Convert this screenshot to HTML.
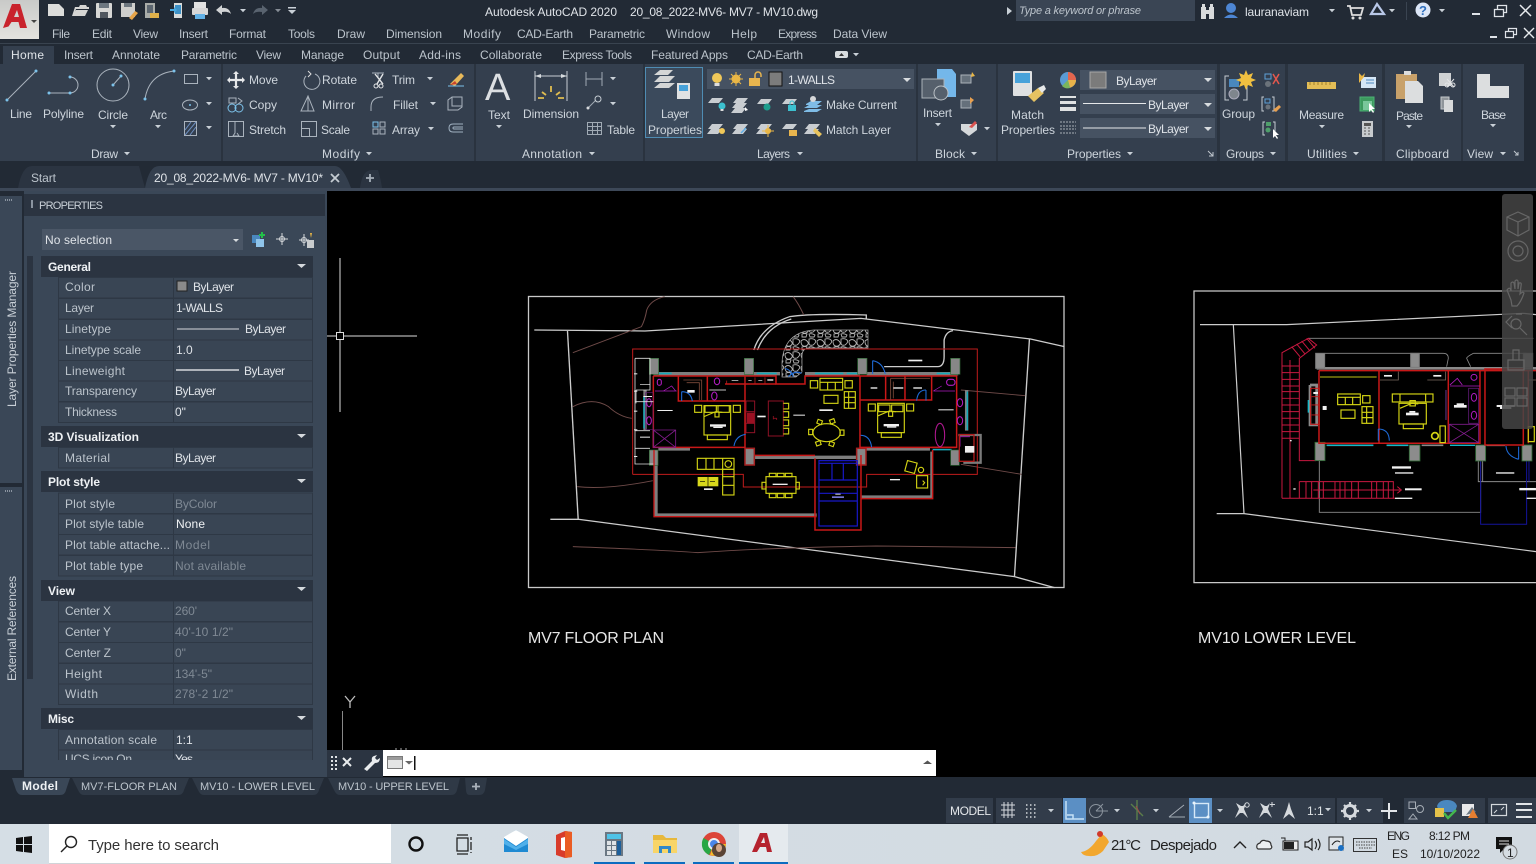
<!DOCTYPE html>
<html lang="en"><head><meta charset="utf-8"><title>Autodesk AutoCAD 2020</title>
<style>
html,body{margin:0;padding:0;background:#000;width:1536px;height:864px;overflow:hidden}
svg{display:block;position:absolute;left:0;top:0}
text{font-family:"Liberation Sans",sans-serif;font-size:12px;fill:#ced5dc}
.m{fill:#bcc4cc}
.d{fill:#7f8994}
.b{font-weight:bold;fill:#eef1f4}
.v{fill:#dfe3e8}
.h{fill:#c9d0d7}
.c{font-size:11px}
</style></head><body>
<svg width="1536" height="864" viewBox="0 0 1536 864" xmlns="http://www.w3.org/2000/svg">
<defs>
<linearGradient id="lg" x1="0" y1="0" x2="0" y2="1"><stop offset="0" stop-color="#c9cac8"/><stop offset="1" stop-color="#e4e3df"/></linearGradient>
<linearGradient id="sb" x1="0" y1="0" x2="1" y2="0"><stop offset="0" stop-color="#d5dee5"/><stop offset="1" stop-color="#d2dae1"/></linearGradient>
<pattern id="cob" width="16" height="13" patternUnits="userSpaceOnUse">
<path d="M1 3q3-3 6 0t-1 5q-5 1-5-5zM9 1q4-1 6 1t-2 5q-4 1-4-2zM2 9q3-1 5 0l-1 3H2zM9 9q3-1 6 1l-1 2h-4z" fill="none" stroke="#b4b4b4" stroke-width=".9"/>
</pattern>
<path id="da" d="M0 0h6l-3 3.2z" fill="#c9d0d7"/>
<g id="ls"><path d="M3 2h11l-4 5H-1z" fill="#c9cdd1"/></g>
</defs>

<!-- base -->
<rect width="1536" height="864" fill="#222a35"/>
<rect x="0" y="43" width="1536" height="1" fill="#39434f"/>
<rect x="0" y="64" width="1524" height="97" fill="#343f4e"/>
<rect x="3" y="46" width="51" height="18" fill="#343f4e"/>

<!-- A logo -->
<rect x="0" y="0" width="39" height="39" fill="url(#lg)"/>
<path d="M3 28 12 4h8l7 24h-7l-1.500-6h-7l-3 4.500zM14 17h5l-2-7z" fill="#c9232c"/>
<path d="M31 20h6l-3 3z" fill="#444"/>

<!-- QAT -->
<path d="M48 4h11l5 5v7H48z" fill="#dcdcda"/>
<path d="M72 16l3-9h4l1-2h6l1 2h2v2h-13l-2 7zM73 16l3-6h12l-3 6z" fill="#d5d5d3"/>
<rect x="96" y="3" width="16" height="15" rx="1" fill="#d7d7d5"/><rect x="99" y="3" width="10" height="5" fill="#6d7780"/><rect x="100" y="12" width="8" height="6" fill="#50575f"/>
<rect x="121" y="3" width="14" height="14" fill="#cfcfcd"/><rect x="124" y="3" width="8" height="4" fill="#6d7780"/><path d="M129 18l6-7 3 2-6 7z" fill="#e6a54a"/>
<rect x="145" y="3" width="10" height="15" fill="#a9aca9"/><rect x="147" y="5" width="6" height="8" fill="#5c6670"/><path d="M150 13h9v5h-9z" fill="#dfb04a"/>
<rect x="174" y="3" width="8" height="15" fill="#d9dcdc"/><rect x="175" y="5" width="6" height="9" fill="#3d91c7"/><path d="M170 9h4V7l3 3-3 3v-2h-4z" fill="#49a9e0"/>
<rect x="194" y="2" width="12" height="6" fill="#e1e1e1"/><rect x="192" y="8" width="16" height="7" rx="1" fill="#d7d7d7"/><rect x="195" y="14" width="10" height="5" fill="#62b1e6"/>
<path d="M216 10l6-5v3q7-1 9 6-3-3-9-2v3z" fill="#d1d3d5"/>
<use href="#da" x="240" y="9"/>
<path d="M268 10l-6-5v3q-7-1-9 6 3-3 9-2v3z" fill="#59636f"/>
<use href="#da" x="275" y="9" opacity=".6"/>
<rect x="288" y="7" width="8" height="1.500" fill="#c9d0d7"/><path d="M288 10h8l-4 4z" fill="#c9d0d7"/>

<!-- title -->
<text x="485" y="16" textLength="132" class="v">Autodesk AutoCAD 2020</text>
<text x="630" y="16" textLength="188" class="v">20_08_2022-MV6- MV7 - MV10.dwg</text>
<path d="M1007 7l5 4-5 4z" fill="#c9d0d7"/>
<rect x="1016" y="0" width="179" height="21" fill="#3a4554"/>
<text x="1019" y="14" textLength="122" font-style="italic" style="font-size:11px" class="m">Type a keyword or phrase</text>
<path d="M1201 7h5v12h-5zM1209 7h5v12h-5zM1202 4h3v3h-3zM1210 4h3v3h-3zM1206 10h3v4h-3z" fill="#d8dadb"/>
<path d="M1231 3a4.500 4.500 0 1 1 0 10 4.500 4.500 0 1 1 0-10zM1224 18q7-7 14 0z" fill="#4d86d4"/>
<text x="1245" y="16" textLength="64" class="v">lauranaviam</text>
<use href="#da" x="1329" y="9"/>
<path d="M1347 6h3l2 9h9l2-7h-12" fill="none" stroke="#ddd" stroke-width="1.800"/><circle cx="1353" cy="18" r="1.500" fill="#ddd"/><circle cx="1360" cy="18" r="1.500" fill="#ddd"/>
<path d="M1377 4l7 10h-13z" fill="none" stroke="#b9c8e8" stroke-width="2.200"/>
<use href="#da" x="1389" y="9"/>
<rect x="1406" y="2" width="1" height="18" fill="#3a4451"/>
<circle cx="1423" cy="10" r="7.500" fill="#dce6f7"/><text x="1419" y="15" style="font-size:13px;font-weight:bold;fill:#2f6fbd">?</text>
<use href="#da" x="1439" y="9"/>
<rect x="1472" y="13" width="8" height="2" fill="#dfe3e8"/>
<path d="M1494.500 9.500h9v7h-9zM1497.500 9V5.500h9v7H1504" fill="none" stroke="#dfe3e8" stroke-width="1.300"/>
<path d="M1520 5l11 11M1531 5l-11 11" stroke="#e8ebee" stroke-width="1.500"/>

<!-- menu -->
<text x="52" y="38" textLength="18" class="m">File</text>
<text x="92" y="38" textLength="20" class="m">Edit</text>
<text x="133" y="38" textLength="25" class="m">View</text>
<text x="179" y="38" textLength="29" class="m">Insert</text>
<text x="229" y="38" textLength="37" class="m">Format</text>
<text x="288" y="38" textLength="27" class="m">Tools</text>
<text x="337" y="38" textLength="28" class="m">Draw</text>
<text x="386" y="38" textLength="56" class="m">Dimension</text>
<text x="463" y="38" textLength="38" class="m">Modify</text>
<text x="517" y="38" textLength="56" class="m">CAD-Earth</text>
<text x="589" y="38" textLength="56" class="m">Parametric</text>
<text x="666" y="38" textLength="44" class="m">Window</text>
<text x="731" y="38" textLength="26" class="m">Help</text>
<text x="778" y="38" textLength="39" class="m">Express</text>
<text x="833" y="38" textLength="54" class="m">Data View</text>
<rect x="1490" y="36" width="7" height="2" fill="#dfe3e8"/>
<path d="M1505.500 31.500h8v6h-8zM1508.500 31v-2.500h8v6H1514" fill="none" stroke="#dfe3e8" stroke-width="1.200"/>
<path d="M1524 28l10 10M1534 28l-10 10" stroke="#e8ebee" stroke-width="1.400"/>

<!-- ribbon tabs -->
<text x="11" y="59" textLength="33" class="v">Home</text>
<text x="64" y="59" textLength="29" class="m">Insert</text>
<text x="112" y="59" textLength="48" class="m">Annotate</text>
<text x="181" y="59" textLength="56" class="m">Parametric</text>
<text x="256" y="59" textLength="25" class="m">View</text>
<text x="301" y="59" textLength="43" class="m">Manage</text>
<text x="363" y="59" textLength="37" class="m">Output</text>
<text x="419" y="59" textLength="42" class="m">Add-ins</text>
<text x="480" y="59" textLength="62" class="m">Collaborate</text>
<text x="562" y="59" textLength="70" class="m">Express Tools</text>
<text x="651" y="59" textLength="77" class="m">Featured Apps</text>
<text x="747" y="59" textLength="56" class="m">CAD-Earth</text>
<rect x="835" y="51" width="13" height="7" rx="2" fill="#d8dcdf"/><path d="M839 56l2.500-3 2.500 3z" fill="#333"/>
<use href="#da" x="853" y="53"/>

<!-- panel separators -->
<g fill="#2a333f">
<rect x="221" y="64" width="2" height="97"/><rect x="474" y="64" width="2" height="97"/><rect x="643" y="64" width="2" height="97"/><rect x="916" y="64" width="2" height="97"/><rect x="996" y="64" width="2" height="97"/><rect x="1217" y="64" width="3" height="97"/><rect x="1285" y="64" width="3" height="97"/><rect x="1382" y="64" width="3" height="97"/><rect x="1461" y="64" width="2" height="97"/>
</g>

<!-- Draw -->
<g fill="none" stroke="#aab3bd" stroke-width="1">
<path d="M7 100 36 71"/>
<path d="M49 93h21a8 8 0 0 0 0-16"/>
<circle cx="113" cy="85" r="16"/>
<path d="M113 85l8-9"/>
<path d="M145 99q4-25 29-28"/>
<rect x="184.500" y="74.500" width="13" height="9"/>
<ellipse cx="190" cy="105" rx="7.500" ry="5"/>
<rect x="184.500" y="121.500" width="12" height="14"/>
<path d="M185 130l6-8M185 135l11-13M190 135l6-8" stroke="#6d8fc0"/>
</g>
<g fill="#7cc2ea"><circle cx="7" cy="100" r="1.500"/><circle cx="36" cy="71" r="1.500"/><circle cx="49" cy="93" r="1.500"/><circle cx="70" cy="93" r="1.500"/><circle cx="70" cy="77" r="1.500"/><circle cx="113" cy="85" r="1.500"/><circle cx="121" cy="76" r="1.500"/><circle cx="145" cy="99" r="1.500"/><circle cx="174" cy="71" r="1.500"/><circle cx="190" cy="105" r="1"/></g>
<use href="#da" x="206" y="77"/><use href="#da" x="206" y="102"/><use href="#da" x="206" y="126"/>
<text x="10" y="118" textLength="22">Line</text>
<text x="43" y="118" textLength="41">Polyline</text>
<text x="98" y="119" textLength="30">Circle</text>
<text x="150" y="119" textLength="17">Arc</text>
<use href="#da" x="110" y="125"/><use href="#da" x="155" y="125"/>
<text x="91" y="158" textLength="27">Draw</text><use href="#da" x="124" y="152"/>

<!-- Modify -->
<path d="M236 72v16M228 80h16" stroke="#e6e8ea" stroke-width="2.200"/><path d="M233 74l3-3 3 3zM233 86l3 3 3-3zM230 77l-3 3 3 3zM242 77l3 3-3 3z" fill="#e6e8ea"/>
<g fill="none" stroke="#aab3bd" stroke-width="1">
<rect x="229" y="98" width="7" height="5"/><circle cx="232" cy="108" r="4" stroke="#7cc2ea"/><circle cx="239" cy="108" r="4" stroke="#7cc2ea"/><path d="M238 98l4 3-4 3"/>
<path d="M228.500 121.500h15v15h-15z"/><path d="M235 122v11l-2 3h6l-2-3"/>
<path d="M315 74a8 8 0 1 1-9 2"/><path d="M308 71l3 3-3 3" stroke="#ddd"/>
<path d="M301 111h13l-6-15zM308 96v15"/>
<rect x="301.500" y="121.500" width="15" height="15"/><rect x="301.500" y="128.500" width="8" height="8"/>
<path d="M372 73h12M378 73v5"/>
<path d="M371 111v-4q0-10 12-10"/>
<rect x="373" y="122" width="5" height="5" stroke="#7cc2ea"/><rect x="380" y="122" width="5" height="5"/><rect x="373" y="129" width="5" height="5"/><rect x="380" y="129" width="5" height="5"/>
<path d="M448 100l4-3h10v10l-4 3h-10zM452 97v9h10"/>
<path d="M463 124h-10q-4 0-4 4t4 4h10M463 127h-9q-1 0-1 1t1 1h9" stroke="#9fb0c0"/>
</g>
<path d="M375 74l8 10M383 74l-6 10" stroke="#e3e5e7" stroke-width="1.400" fill="none"/><circle cx="376" cy="86" r="2" fill="none" stroke="#e3e5e7"/><circle cx="381" cy="86" r="2" fill="none" stroke="#e3e5e7"/>
<path d="M450 84l11-11 3 3-9 10z" fill="#e8b95a"/><path d="M448 86h16" stroke="#7cc2ea"/><path d="M450 85l5-4 2 3z" fill="#c9432e"/>
<text x="249" y="84" textLength="29">Move</text><text x="249" y="109" textLength="28">Copy</text><text x="249" y="134" textLength="37">Stretch</text>
<text x="322" y="84" textLength="35">Rotate</text><text x="322" y="109" textLength="33">Mirror</text><text x="321" y="134" textLength="29">Scale</text>
<text x="392" y="84" textLength="23">Trim</text><text x="393" y="109" textLength="25">Fillet</text><text x="392" y="134" textLength="28">Array</text>
<use href="#da" x="427" y="77"/><use href="#da" x="430" y="102"/><use href="#da" x="428" y="127"/>
<text x="322" y="158" textLength="38">Modify</text><use href="#da" x="366" y="152"/>

<!-- Annotation -->
<text x="485" y="100" style="font-size:38px;fill:#dcdfe2">A</text>
<text x="488" y="119" textLength="22">Text</text><use href="#da" x="496" y="125"/>
<path d="M535 71v30M567 71v30M535 76h32" stroke="#c7ced4" fill="none"/><path d="M535 76l6-2v4zM567 76l-6-2v4z" fill="#d6dadd"/>
<path d="M551 86v6M542 92l4 3M560 92l-4 3M538 98h6M558 98h6" stroke="#e0bd50" stroke-width="1.800"/>
<text x="523" y="118" textLength="56">Dimension</text>
<path d="M586 72v14M602 72v14M586 79h16" stroke="#a0aab4" fill="none"/>
<use href="#da" x="610" y="77"/>
<path d="M588 108l8-8" stroke="#a0aab4"/><circle cx="598" cy="99" r="3" fill="none" stroke="#c7ced4"/><circle cx="588" cy="108" r="1.500" fill="#d7dadd"/>
<use href="#da" x="610" y="102"/>
<path d="M587.500 122.500h14v12h-14zM587.500 126.500h14M587.500 130.500h14M592.500 122.500v12M597.500 122.500v12" fill="none" stroke="#a0aab4"/>
<text x="607" y="134" textLength="28">Table</text>
<text x="522" y="158" textLength="60">Annotation</text><use href="#da" x="589" y="152"/>

<!-- Layers -->
<rect x="645.500" y="67.500" width="57" height="70" fill="#3b4a5c" stroke="#4f8cb3"/>
<path d="M660 70h13l-5 5h-14zM660 76h15l-6 6h-15zM660 83h15l-6 5h-15z" fill="#d4d6d6"/>
<rect x="677" y="83" width="13" height="16" fill="#e0e2e3"/><rect x="679" y="85" width="9" height="6" fill="#47a2da"/>
<text x="661" y="118" textLength="28">Layer</text>
<text x="648" y="134" textLength="54">Properties</text>
<rect x="707" y="69" width="207" height="20" fill="#465262"/>
<circle cx="717" cy="78" r="5" fill="#f0c859"/><rect x="714.500" y="83" width="5" height="3" fill="#ddd"/>
<circle cx="736" cy="79" r="4.500" fill="#eab746"/><path d="M736 72v14M729 79h14M731 74l10 10M741 74l-10 10" stroke="#eab746"/>
<rect x="749" y="78" width="11" height="8" fill="#e8b54e"/><path d="M755 78v-3a3 3 0 0 1 6 0v2" fill="none" stroke="#e8b54e" stroke-width="1.500"/>
<rect x="769" y="72" width="13" height="14" fill="#7c7c7c" stroke="#111"/>
<text x="788" y="84" textLength="47" class="v">1-WALLS</text>
<path d="M903 78h8l-4 4z" fill="#d8dcdf"/>
<use href="#ls" x="709" y="96"/><circle cx="722" cy="106" r="3.500" fill="#3cc0cf"/><rect x="720.500" y="109" width="3" height="2" fill="#ddd"/>
<use href="#ls" x="734" y="96"/><use href="#ls" x="733" y="101"/><use href="#ls" x="732" y="106"/><path d="M745 107l3 3-3 1z" fill="#fff"/>
<use href="#ls" x="758" y="97"/><circle cx="767" cy="107" r="3.500" fill="#1e9e8d"/>
<use href="#ls" x="783" y="97"/><rect x="788" y="105" width="8" height="6" fill="#3cc0cf"/><path d="M790 105v-2a2 2 0 0 1 4 0v2" fill="none" stroke="#3cc0cf"/>
<path d="M806 104l5-3h11l-5 4h-11zM804 108l5-3h13l-5 3h-13zM804 111l5-2h13l-5 3h-13z" fill="#7fbce6"/><circle cx="813" cy="99" r="3" fill="#d5d7d9"/>
<text x="826" y="109" textLength="71">Make Current</text>
<use href="#ls" x="709" y="122"/><use href="#ls" x="708" y="127"/><circle cx="722" cy="131" r="3" fill="#f0c859"/>
<use href="#ls" x="734" y="122"/><use href="#ls" x="733" y="127"/><path d="M741 133l5-5" stroke="#5fb0e8" stroke-width="1.500"/>
<use href="#ls" x="758" y="122"/><use href="#ls" x="757" y="127"/><circle cx="768" cy="131" r="3" fill="#eab746"/><path d="M768 125v12M762 131h12" stroke="#eab746"/>
<use href="#ls" x="783" y="122"/><rect x="789" y="130" width="8" height="6" fill="#e8b54e"/>
<use href="#ls" x="806" y="122"/><use href="#ls" x="805" y="127"/><path d="M815 128l7 6-3 3-6-6z" fill="#e8c35e"/>
<text x="826" y="134" textLength="65">Match Layer</text>
<text x="757" y="158" textLength="33">Layers</text><use href="#da" x="797" y="152"/>

<!-- Block -->
<path d="M937 69h15l4 5v23h-19z" fill="#74b7ea"/>
<rect x="922" y="79" width="22" height="19" fill="#56606c" stroke="#aab2b8"/>
<circle cx="941" cy="93" r="7" fill="#56606c" stroke="#bac0c5"/>
<text x="923" y="117" textLength="29">Insert</text><use href="#da" x="935" y="123"/>
<rect x="961" y="75" width="10" height="8" fill="#65707b" stroke="#aab2b8"/><path d="M972 72l3 4-4 1z" fill="#eab746"/>
<rect x="961" y="100" width="10" height="8" fill="#65707b" stroke="#aab2b8"/><path d="M970 97l4 3-4 4z" fill="#e8a050"/>
<path d="M961 124h16v6l-8 6-8-6z" fill="#d5d8da"/><path d="M969 127l6-6 2 2-5 5z" fill="#d9534f"/><use href="#da" x="984" y="127"/>
<text x="935" y="158" textLength="30">Block</text><use href="#da" x="971" y="152"/>

<!-- Properties -->
<rect x="1013" y="71" width="19" height="25" rx="1" fill="#dfe1e2"/><rect x="1015" y="73" width="15" height="10" fill="#47a2da"/>
<path d="M1028 96l10-8 6 5-10 9z" fill="#e5c262"/><path d="M1038 88l6-3 2 4-4 4z" fill="#e6e8e9"/>
<text x="1011" y="119" textLength="33">Match</text><text x="1001" y="134" textLength="54">Properties</text>
<circle cx="1068" cy="80" r="8" fill="#5a9bd5"/><path d="M1068 80V72a8 8 0 0 1 8 8z" fill="#e4654d"/><path d="M1068 80h8a8 8 0 0 1-6 7.800z" fill="#e9b34a"/><path d="M1068 80l2 8a8 8 0 0 1-8-2z" fill="#7ab55c"/>
<rect x="1060" y="96" width="16" height="2" fill="#dfe1e2"/><rect x="1060" y="101" width="16" height="3" fill="#dfe1e2"/><rect x="1060" y="107" width="16" height="4" fill="#dfe1e2"/>
<path d="M1060 122h16M1060 126h16M1060 129h16M1060 133h16" stroke="#a8afb7" stroke-dasharray="2 1"/>
<rect x="1080" y="70" width="135" height="20" fill="#465262"/><rect x="1080" y="94" width="135" height="20" fill="#465262"/><rect x="1080" y="118" width="135" height="20" fill="#465262"/>
<rect x="1090" y="72" width="16" height="16" fill="#7b7b7b" stroke="#a7a7a7"/>
<text x="1116" y="85" textLength="41" class="v">ByLayer</text>
<path d="M1083 103.500h63M1083 128h63" stroke="#e6e8ea"/>
<text x="1148" y="109" textLength="41" class="v">ByLayer</text><text x="1148" y="133" textLength="41" class="v">ByLayer</text>
<path d="M1204 78h8l-4 4zM1204 103h8l-4 4zM1204 127h8l-4 4z" fill="#d8dcdf"/>
<text x="1067" y="158" textLength="54">Properties</text><use href="#da" x="1127" y="152"/>
<path d="M1208 151l5 5M1213 152v4h-4" stroke="#c0c7ce" fill="none"/>

<!-- Groups -->
<path d="M1229 76h-4v24h4M1243 76h4v24h-4" stroke="#c4cbd2" fill="none"/>
<rect x="1229" y="79" width="10" height="8" fill="#4a88bf"/><circle cx="1234" cy="94" r="5" fill="#7f868d" stroke="#aab"/>
<path d="M1246 70l2 5 5-2-2 5 5 2-5 2 2 5-5-2-2 5-2-5-5 2 2-5-5-2 5-2-2-5 5 2z" fill="#f0c040"/>
<text x="1222" y="118" textLength="33">Group</text>
<rect x="1265" y="74" width="6" height="5" fill="none" stroke="#5ea1d8"/><circle cx="1268" cy="84" r="3" fill="#6b737b"/><path d="M1273 74l6 10M1279 74l-6 10" stroke="#e5574d" stroke-width="1.500"/>
<path d="M1264 97h-2v14h2M1272 97h2v14h-2" stroke="#c4cbd2" fill="none"/><rect x="1265" y="99" width="5" height="4" fill="none" stroke="#5ea1d8"/><circle cx="1268" cy="107" r="2.500" fill="#6b737b"/><path d="M1273 110l6-5 2 2-5 5z" fill="#e8a050"/>
<path d="M1265 122h-2v13h2M1273 122h2v13h-2" stroke="#c4cbd2" fill="none"/><rect x="1266" y="122" width="5" height="4" fill="#4f9f6b"/><circle cx="1268" cy="130" r="2.500" fill="#4f9f6b"/><path d="M1273 129v9l2-2 2 3 1-1-2-3h3z" fill="#fff"/>
<text x="1226" y="158" textLength="38">Groups</text><use href="#da" x="1270" y="152"/>

<!-- Utilities -->
<rect x="1307" y="82" width="29" height="7" fill="#e3bd56"/><path d="M1310 82v3M1314 82v3M1318 82v3M1322 82v3M1326 82v3M1330 82v3" stroke="#a0812c"/>
<text x="1299" y="119" textLength="45">Measure</text><use href="#da" x="1319" y="125"/>
<rect x="1361" y="77" width="15" height="11" fill="#d5e6f5"/><path d="M1359 73l3 3 3-3-1 4-5 6z" fill="#eab746"/><path d="M1366 80h8M1366 83h8" stroke="#4a88bf"/>
<rect x="1360" y="97" width="14" height="14" fill="#3d9a5f" stroke="#4cb274"/><rect x="1363" y="101" width="9" height="9" fill="#79c79b"/><path d="M1369 103v9l2-2 2 3 1-1-2-3h3z" fill="#fff"/>
<rect x="1362" y="121" width="11" height="16" fill="#c7cbce"/><rect x="1364" y="123" width="7" height="3" fill="#555"/><path d="M1364 128h2M1368 128h2M1364 131h2M1368 131h2M1364 134h2M1368 134h2" stroke="#555"/>
<text x="1307" y="158" textLength="40">Utilities</text><use href="#da" x="1353" y="152"/>

<!-- Clipboard -->
<rect x="1396" y="74" width="21" height="25" fill="#c8a16a"/><rect x="1404" y="71" width="7" height="4" fill="#ddd"/>
<path d="M1405 81h13l5 5v17h-18z" fill="#dcdedf"/>
<text x="1396" y="120" textLength="27">Paste</text><use href="#da" x="1406" y="125"/>
<text x="1396" y="158" textLength="53">Clipboard</text>
<rect x="1439" y="73" width="12" height="13" fill="#cfd2d4"/><path d="M1447 79l7 8M1454 79l-7 8" stroke="#e3e5e7"/><circle cx="1447" cy="85" r="2" fill="none" stroke="#e3e5e7"/><circle cx="1453" cy="85" r="2" fill="none" stroke="#e3e5e7"/>
<rect x="1441" y="97" width="8" height="12" fill="#8f959a" stroke="#c5c9cc"/><rect x="1444" y="100" width="9" height="12" fill="#d8dadb"/>

<!-- View -->
<path d="M1477 74h13v12h19v12h-32z" fill="#dcdedf"/>
<text x="1481" y="119" textLength="25">Base</text><use href="#da" x="1490" y="124"/>
<text x="1467" y="158" textLength="26">View</text><use href="#da" x="1500" y="152"/>
<path d="M1514 151l4 4M1518 152v3h-3" stroke="#c0c7ce" fill="none"/>

<!-- doc tabs -->
<path d="M18 188q4-22 14-22h107l6 22z" fill="#2b3441"/>
<path d="M145 188q4-22 14-22h176q8 0 16 22z" fill="#343f4e"/>
<text x="31" y="182" textLength="25" class="m">Start</text>
<text x="154" y="182" textLength="169" class="v">20_08_2022-MV6- MV7 - MV10*</text>
<path d="M331 174l8 8M339 174l-8 8" stroke="#c5ccd3" stroke-width="1.800"/>
<path d="M360 188q2-18 12-18h6q3 10 4 18z" fill="#2b3441"/>
<path d="M370 174v8M366 178h8" stroke="#a5aeb8" stroke-width="1.800"/>
<rect x="0" y="188" width="1536" height="3" fill="#3d4858"/>

<!-- left zone -->
<rect x="0" y="191" width="327" height="586" fill="#3a4757"/>
<rect x="0" y="191" width="24" height="586" fill="#222a35"/>
<rect x="0" y="196" width="22" height="287" fill="#3a4757"/>
<rect x="0" y="487" width="22" height="283" fill="#3a4757"/>
<path d="M5 200h8M5 491h8" stroke="#8a94a0" stroke-dasharray="1 1" stroke-width="2"/>
<text transform="translate(16,407) rotate(-90)" textLength="136" class="h">Layer Properties Manager</text>
<text transform="translate(16,681) rotate(-90)" textLength="105" class="h">External References</text>
<rect x="24" y="194" width="301" height="22" fill="#2b3441"/>
<rect x="31" y="200" width="2" height="8" fill="#8a94a0"/>
<text x="39" y="209" textLength="64" class="h c">PROPERTIES</text>
<rect x="27" y="256" width="6" height="423" fill="#2b3441"/>
<rect x="42" y="229" width="201" height="21" fill="#4a5666"/>
<text x="45" y="244" textLength="67" class="v">No selection</text>
<path d="M233 239h6l-3 3z" fill="#d8dcdf"/>
<rect x="252" y="235" width="8" height="8" fill="#4a88bf"/><rect x="256" y="239" width="8" height="8" fill="#8fc4ea"/><path d="M262 232v6M259 235h6" stroke="#23c04a" stroke-width="2"/>
<circle cx="282" cy="239" r="2.500" fill="none" stroke="#d5d8db"/><path d="M282 233v12M276 239h12" stroke="#d5d8db"/>
<circle cx="304" cy="240" r="2.500" fill="none" stroke="#d5d8db"/><path d="M304 234v12M299 240h10" stroke="#d5d8db"/><rect x="307" y="240" width="7" height="8" fill="#c9ccce"/><path d="M310 233l2 0-1 5z" fill="#eab746"/>

<!-- property rows -->
<g fill="#394554" stroke="#2e3845">
<rect x="58.500" y="277.500" width="254" height="20.500"/><rect x="58.500" y="298.500" width="254" height="20.500"/><rect x="58.500" y="319.500" width="254" height="20.500"/><rect x="58.500" y="340" width="254" height="20.500"/><rect x="58.500" y="360.500" width="254" height="20.500"/><rect x="58.500" y="381" width="254" height="20.500"/><rect x="58.500" y="402" width="254" height="20.500"/>
<rect x="58.500" y="447.500" width="254" height="20.500"/>
<rect x="58.500" y="493" width="254" height="20.500"/><rect x="58.500" y="514" width="254" height="20.500"/><rect x="58.500" y="534.500" width="254" height="20.500"/><rect x="58.500" y="555.500" width="254" height="20.500"/>
<rect x="58.500" y="601" width="254" height="20.500"/><rect x="58.500" y="622" width="254" height="20.500"/><rect x="58.500" y="642.500" width="254" height="20.500"/><rect x="58.500" y="663.500" width="254" height="20.500"/><rect x="58.500" y="684" width="254" height="20.500"/>
<rect x="58.500" y="729.500" width="254" height="20.500"/><rect x="58.500" y="750" width="254" height="20.500"/>
</g>
<rect x="173" y="277" width="1" height="146" fill="#2e3845"/><rect x="173" y="447" width="1" height="21" fill="#2e3845"/><rect x="173" y="493" width="1" height="83" fill="#2e3845"/><rect x="173" y="601" width="1" height="104" fill="#2e3845"/><rect x="173" y="729" width="1" height="30" fill="#2e3845"/>
<g fill="#2b3441">
<rect x="41" y="256" width="272" height="21"/><rect x="41" y="426" width="272" height="21"/><rect x="41" y="471" width="272" height="21"/><rect x="41" y="580" width="272" height="21"/><rect x="41" y="708" width="272" height="21"/>
</g>
<g fill="#d4d8dc"><path d="M297 264h9l-4.500 4zM297 434h9l-4.500 4zM297 479h9l-4.500 4zM297 587h9l-4.500 4zM297 716h9l-4.500 4z"/></g>
<text x="48" y="271" textLength="43" class="b">General</text>
<text x="48" y="441" textLength="91" class="b">3D Visualization</text>
<text x="48" y="486" textLength="52" class="b">Plot style</text>
<text x="48" y="595" textLength="27" class="b">View</text>
<text x="48" y="723" textLength="26" class="b">Misc</text>
<text x="65" y="291" textLength="30" class="m">Color</text>
<text x="65" y="312" textLength="29" class="m">Layer</text>
<text x="65" y="333" textLength="46" class="m">Linetype</text>
<text x="65" y="354" textLength="76" class="m">Linetype scale</text>
<text x="65" y="375" textLength="60" class="m">Lineweight</text>
<text x="65" y="395" textLength="72" class="m">Transparency</text>
<text x="65" y="416" textLength="52" class="m">Thickness</text>
<text x="65" y="462" textLength="45" class="m">Material</text>
<text x="65" y="508" textLength="50" class="m">Plot style</text>
<text x="65" y="528" textLength="79" class="m">Plot style table</text>
<text x="65" y="549" textLength="105" class="m">Plot table attache...</text>
<text x="65" y="570" textLength="78" class="m">Plot table type</text>
<text x="65" y="615" textLength="46" class="m">Center X</text>
<text x="65" y="636" textLength="46" class="m">Center Y</text>
<text x="65" y="657" textLength="46" class="m">Center Z</text>
<text x="65" y="678" textLength="37" class="m">Height</text>
<text x="65" y="698" textLength="33" class="m">Width</text>
<text x="65" y="744" textLength="92" class="m">Annotation scale</text>
<rect x="177" y="281" width="10" height="10" fill="#8a8a8a" stroke="#222"/>
<text x="193" y="291" textLength="41" class="v">ByLayer</text>
<text x="176" y="312" textLength="47" class="v">1-WALLS</text>
<path d="M177 329h62" stroke="#d5d8db"/><text x="245" y="333" textLength="41" class="v">ByLayer</text>
<text x="176" y="354" class="v">1.0</text>
<path d="M176 370h63" stroke="#d5d8db" stroke-width="1.500"/><text x="244" y="375" textLength="41" class="v">ByLayer</text>
<text x="175" y="395" textLength="41" class="v">ByLayer</text>
<text x="175" y="416" class="v">0"</text>
<text x="175" y="462" textLength="41" class="v">ByLayer</text>
<text x="175" y="508" textLength="42" class="d">ByColor</text>
<text x="176" y="528" textLength="29" style="fill:#f0f2f4">None</text>
<text x="175" y="549" textLength="35" class="d">Model</text>
<text x="175" y="570" textLength="71" class="d">Not available</text>
<text x="175" y="615" textLength="22" class="d">260'</text>
<text x="175" y="636" textLength="58" class="d">40'-10 1/2"</text>
<text x="175" y="657" class="d">0"</text>
<text x="175" y="678" textLength="37" class="d">134'-5"</text>
<text x="175" y="698" textLength="58" class="d">278'-2 1/2"</text>
<text x="176" y="744" class="v">1:1</text>
<clipPath id="ucs"><rect x="58" y="750" width="255" height="10"/></clipPath>
<g clip-path="url(#ucs)"><text x="65" y="763" textLength="67" class="m">UCS icon On</text><text x="175" y="763" textLength="18" class="v">Yes</text></g>
<rect x="58" y="760" width="255" height="17" fill="#3a4757"/>

<!-- drawing area -->
<rect x="327" y="191" width="1209" height="586" fill="#000"/>

<!-- MV7 sheet frame -->
<rect x="528.500" y="296.500" width="535.500" height="291" fill="none" stroke="#c9c9c9" stroke-width="1.300"/>
<!-- site, zoom-4 coordinates -->
<g transform="translate(520,285) scale(.357,.3333)" fill="none">
<g stroke="#cccccc" stroke-width="3.800">
<path d="M40 135 350 138 955 100 1430 162 1525 185"/>
<path d="M133 138 163 703"/>
<path d="M85 703H163L1385 875 1497 908"/>
<path d="M1427 162 1385 875"/>
<path d="M655 195q20-70 100-100 60-10 215-5v12"/>
<path d="M665 195q25-70 95-93"/>
<path d="M1020 245H1170q18 0 18-30V165q5-25 25-28"/>
</g>
<g stroke="#6e4a48" stroke-width="2.800">
<path d="M148 203 340 125q10-20 15-50 10-30 50-40"/>
<path d="M765 35q15 20 30 55"/>
<path d="M148 365q55-30 100 0 30 30 65 35"/>
<path d="M160 605q80 10 212-18"/>
<path d="M148 785q250 10 350 18 200-15 500-20l390 5"/>
<path d="M1235 315l180 17M1235 538l170 30"/>
</g>
</g>
<!-- cobblestone -->
<path d="M782 375V362q2-30 32-32h54v18h-58q-8 0-8 8v16l-6 5h-14z" fill="url(#cob)" stroke="#a8a8a8" stroke-width=".7"/>
<!-- plan, zoom-10 coordinates -->
<g transform="translate(630,340) scale(.3333)" fill="none" stroke-width="3">
<path d="M8 403V27H1042V403H710V441H340V403H8" stroke="#c01c1c" stroke-width="3"/>
<g stroke="#7e7e7e" stroke-width="10"><path d="M70 101H450M525 101H690M710 101H985"/><path d="M1010 150V272M45 150V270"/><path d="M85 327H180M375 352H680M705 327H900"/><path d="M78 330V525H560" stroke-width="10"/><path d="M905 335V470H695" stroke-width="8"/></g>
<g stroke="#16a9b8" stroke-width="4.500"><path d="M75 100H125M380 100H440M555 100H640M650 100H690M920 100H960M42 170V265M1012 155V270M908 329H965M70 270V320"/></g>
<g fill="#878787" stroke="#2f6a35" stroke-width="2"><rect x="58" y="55" width="28" height="48"/><rect x="343" y="55" width="28" height="48"/><rect x="683" y="55" width="28" height="48"/><rect x="962" y="55" width="28" height="48"/><rect x="58" y="330" width="26" height="46"/><rect x="962" y="330" width="26" height="46"/></g>
<g fill="#878787" stroke="#a52020" stroke-width="4.500"><rect x="345" y="325" width="28" height="50"/><rect x="680" y="325" width="28" height="50"/></g>
<g stroke="#c81818" stroke-width="4.500"><path d="M70 108H438V132H525V108H980V322H690V108M70 108V322H345V183H145V108M232 108V183M345 108V183"/><path d="M285 132H438M690 180H905V108M767 108V180M825 108V180M977 322H905"/>
<path d="M72 330V530H560" stroke-width="4"/><path d="M375 346H555M555 355V570H693V345M695 476H908V330"/></g>
<path d="M160 120H215V180M170 128H208V180M782 115V180M782 115H900M790 125V175" stroke="#7e4a3a" stroke-width="2.500"/>
<path d="M290 122V131M345 108V132M375 112V131M405 112V131" stroke="#b01c1c" stroke-width="2.500"/>
<g stroke="#1e6bd8" stroke-width="3.200"><path d="M155 155q28 0 32 28M155 155v28M312 318q5-30 35-35M728 62q30 5 38 40M728 62v40M692 286q28 0 33 36M888 150q-25 0-28 32M888 150v32M465 85q20 5 25 25M475 110q20-20 40-10"/></g>
<g stroke="#b01cc0" stroke-width="3.200"><ellipse cx="57" cy="188" rx="7" ry="12"/><ellipse cx="57" cy="242" rx="7" ry="12"/><rect x="47" y="158" width="22" height="110" stroke-width="2" stroke="#5c1a70"/><rect x="82" y="118" width="12" height="18" rx="6"/><path d="M75 153H140M100 153l25-15 12 15" stroke-width="2"/><path d="M70 270H137V322H70ZM70 270l67 52M137 270l-67 52" stroke="#7f1c8a" stroke-width="2.500"/><ellipse cx="930" cy="285" rx="14" ry="35" stroke="#b01890"/><ellipse cx="990" cy="188" rx="8" ry="12"/><ellipse cx="990" cy="242" rx="8" ry="12"/><rect x="950" y="118" width="25" height="18" rx="8"/><path d="M910 153H975M910 153l25-15" stroke-width="2"/><ellipse cx="261" cy="124" rx="8" ry="10"/><ellipse cx="253" cy="168" rx="8" ry="12"/><path d="M238 150h50" stroke="#fff" stroke-width="2.500"/><path d="M990 290h30M990 290v30" stroke-width="2.500"/></g>
<path d="M15 55H60V150H18M15 55V372H70M18 150V190M15 185H70M15 325H60M15 272H60" stroke="#dedede" stroke-width="2.500"/>
<g fill="#eee"><rect x="12" y="100" width="10" height="3"/><rect x="12" y="152" width="10" height="3"/><rect x="12" y="212" width="10" height="3"/><rect x="12" y="268" width="10" height="3"/><rect x="12" y="348" width="10" height="3"/><rect x="30" y="132" width="30" height="2"/><rect x="40" y="168" width="26" height="3"/><rect x="30" y="290" width="30" height="3"/></g>
<g stroke="#8e1226" stroke-width="3"><rect x="348" y="183" width="26" height="95"/><rect x="415" y="183" width="45" height="105"/><path d="M348 215h26M348 250h26"/></g>
<rect x="351" y="218" width="22" height="32" fill="#9a1022"/>
<path d="M430 235h10v5M430 228v10" stroke="#8d1020" stroke-width="2.500"/>
<g stroke="#d4d414" stroke-width="3.400">
<rect x="222" y="197" width="80" height="88"/><rect x="225" y="197" width="34" height="20"/><rect x="264" y="197" width="34" height="20"/><rect x="194" y="196" width="21" height="21"/><rect x="310" y="196" width="21" height="21"/><rect x="232" y="285" width="60" height="14"/><path d="M222 230l35-15 20 2M255 215v16h12v-14"/>
<rect x="743" y="190" width="80" height="88"/><rect x="746" y="195" width="34" height="20"/><rect x="785" y="195" width="34" height="20"/><rect x="715" y="192" width="21" height="21"/><rect x="830" y="192" width="21" height="21"/><rect x="754" y="278" width="60" height="14"/><path d="M743 228l35-15 20 2M776 213v16h12v-14"/>
<rect x="570" y="115" width="68" height="35"/><path d="M570 127h68M593 127v23M616 127v23"/><rect x="541" y="122" width="22" height="22"/><rect x="645" y="122" width="22" height="22"/><rect x="582" y="166" width="42" height="24"/><rect x="643" y="155" width="33" height="50"/><path d="M643 172h33M643 188h33M656 155v50"/>
<ellipse cx="590" cy="278" rx="41" ry="27"/><rect x="562" y="240" width="14" height="12" transform="rotate(20 569 246)"/><rect x="600" y="238" width="14" height="12" transform="rotate(-20 607 244)"/><rect x="536" y="268" width="12" height="16"/><rect x="630" y="270" width="12" height="16"/><rect x="558" y="304" width="14" height="12" transform="rotate(-20 565 310)"/><rect x="598" y="306" width="14" height="12" transform="rotate(20 605 312)"/>
<path d="M460 190h16v17h-16M460 215h16v17h-16M460 240h16v17h-16M460 265h16v17h-16"/>
<rect x="202" y="355" width="110" height="33"/><path d="M228 355v33M252 355v33M278 355v33"/><rect x="278" y="388" width="34" height="77"/><path d="M278 410h34M278 436h34"/><circle cx="295" cy="372" r="10"/>
<rect x="408" y="410" width="90" height="50"/><rect x="418" y="400" width="20" height="10"/><rect x="442" y="400" width="20" height="10"/><rect x="466" y="400" width="20" height="10"/><rect x="418" y="461" width="20" height="12"/><rect x="442" y="461" width="20" height="12"/><rect x="466" y="461" width="20" height="12"/><rect x="396" y="427" width="12" height="20"/><rect x="498" y="427" width="10" height="20"/>
<rect x="828" y="365" width="30" height="32" transform="rotate(15 843 381)"/><circle cx="873" cy="390" r="8"/><rect x="860" y="407" width="33" height="37"/><path d="M878 422l6 6-6 8"/>
</g>
<rect x="203" y="411" width="62" height="28" fill="#d8d81c"/><path d="M234 411v28M210 425h15M240 425h15" stroke="#000" stroke-width="2"/>
<g stroke="#1818c8" stroke-width="3.600"><rect x="567" y="362" width="115" height="196"/><path d="M567 370H682M606 370v50M640 370v50M567 420H682M567 460H682M567 483H682"/></g>
<rect x="606" y="469" width="36" height="5" fill="#7878d8"/><rect x="616" y="461" width="16" height="3" fill="#ddd"/>
<path d="M985 285H1052V368H1000" stroke="#7a7a7a" stroke-width="7"/><rect x="988" y="284" width="44" height="80" stroke="#b01c1c" stroke-width="4"/>
<rect x="1005" y="318" width="28" height="20" fill="#eee"/>
<g fill="#f0f0f0"><rect x="240" y="253" width="48" height="7"/><rect x="250" y="260" width="28" height="4"/><rect x="761" y="252" width="46" height="7"/><rect x="771" y="259" width="28" height="4"/><rect x="382" y="227" width="25" height="5"/><rect x="490" y="224" width="35" height="3"/><rect x="568" y="208" width="40" height="5"/><rect x="222" y="445" width="26" height="5"/><rect x="428" y="431" width="45" height="4"/><rect x="780" y="417" width="30" height="4"/><rect x="835" y="59" width="42" height="5"/><rect x="82" y="210" width="46" height="3"/><rect x="925" y="208" width="46" height="3"/><rect x="172" y="150" width="22" height="8"/><rect x="305" y="121" width="20" height="2"/><rect x="355" y="120" width="10" height="2"/><rect x="385" y="120" width="12" height="2"/><rect x="412" y="118" width="18" height="4"/><rect x="722" y="142" width="20" height="4"/><rect x="790" y="142" width="30" height="4"/><rect x="850" y="142" width="26" height="4"/></g>
</g>
<text x="528" y="643" textLength="136" style="font-size:16px;fill:#e6e6e6">MV7 FLOOR PLAN</text>

<!-- MV10 -->
<text x="1198" y="643" textLength="158" style="font-size:16px;fill:#e6e6e6">MV10 LOWER LEVEL</text>
<g transform="translate(1180,190) scale(.3333)" fill="none" stroke-width="3">
<path d="M1068 303H42V1178H1068" stroke="#c9c9c9" stroke-width="3.800"/>
<path d="M60 404H320L1030 370 1068 374M160 404 192 971M110 971H192L1068 1085" stroke="#cccccc" stroke-width="3.600"/>
<path d="M385 445H1060M435 490H790q15 0 15 15l-5 25M880 490H1040M880 490q-20 10-20 15l12 25" stroke="#8a8a8a" stroke-width="2.500"/>
<path d="M418 770V967H902V770M895 810V875H1068M908 810V875" stroke="#8a8a8a" stroke-width="2.800"/>
<path d="M902 810V1003H1040V810M1047 810V875" stroke="#14149c" stroke-width="3"/>
<g stroke="#c81840" stroke-width="3"><path d="M306 925V488L385 445 410 465 358 505V812H408"/><path d="M330 510V925"/><path d="M306 925H645M358 875H640V925M358 875V925"/>
<path d="M306 528H358M306 548H358M306 568H358M306 588H358M306 605H358M306 625H358M306 645H358M306 665H358M306 685H358M306 705H358M306 725H358M306 745H358"/>
<path d="M335 470l25 30M350 462l25 30M365 453l25 30M380 445l25 30"/>
<path d="M378 875v50M395 875v50M415 875v50M430 875v50M465 875v50M480 875v50M495 875v50M515 875v50M535 875v50M575 875v50M590 875v50M610 875v50M625 875v50"/>
<path d="M400 900H660M652 890l12 10-12 10"/></g>
<path d="M410 535H1068M390 585H410V705H390V585" stroke="#8a8a8a" stroke-width="8"/>
<path d="M440 766H580M620 766H685M725 766H790M920 766H975" stroke="#8a8a8a" stroke-width="5"/>
<path d="M620 766H685M810 766H885M385 630V668M440 766H580" stroke="#16b8c8" stroke-width="4"/>
<g fill="#8c8c8c" stroke="#7c7c7c"><rect x="407" y="490" width="27" height="45"/><rect x="692" y="490" width="26" height="42"/><rect x="1030" y="490" width="28" height="42"/></g>
<g fill="#8c8c8c" stroke="#2f6a35" stroke-width="2.500"><rect x="405" y="757" width="30" height="55"/><rect x="688" y="765" width="32" height="48"/><rect x="887" y="765" width="30" height="48"/><rect x="1026" y="765" width="30" height="48"/></g>
<g stroke="#c81818" stroke-width="4.500"><path d="M417 542H1068M417 542V760H900V542M597 542V760M805 542V760M915 537H1030V765H915ZM1045 540V760"/><rect x="392" y="595" width="26" height="108" stroke-width="3"/><path d="M395 620h22M395 645h22M395 675h22" stroke-width="2.500"/></g>
<path d="M420 561H590" stroke="#c0c014" stroke-width="3"/>
<path d="M600 570H655V545M742 570H797V545M1045 570H1068" stroke="#7a6a60" stroke-width="2.500"/>
<g stroke="#d4d414" stroke-width="3.500"><rect x="473" y="612" width="68" height="32"/><path d="M473 622h68M496 622v22M518 622v22"/><rect x="548" y="617" width="22" height="22"/><rect x="483" y="660" width="42" height="25"/><rect x="546" y="650" width="33" height="50"/><path d="M546 667h33M546 683h33M560 650v50"/>
<rect x="637" y="612" width="122" height="24"/><rect x="657" y="640" width="82" height="62"/><rect x="670" y="702" width="60" height="14"/><path d="M660 612v24M737 612v24M660 655l35-15 20 2M690 632h16v16h-16z"/>
<path d="M780 708H796V758H780ZM1045 710h18v45h-18z"/></g>
<circle cx="765" cy="738" r="10" stroke="#d4d414" stroke-width="5"/>
<g stroke="#1e6bd8" stroke-width="3.200"><path d="M595 717q32 0 33 35M595 717v35M978 768q2 30 38 40M1016 770v38"/></g>
<g stroke="#b01cc0" stroke-width="3"><ellipse cx="882" cy="622" rx="8" ry="12"/><ellipse cx="882" cy="676" rx="8" ry="12"/><ellipse cx="882" cy="562" rx="9" ry="9"/><path d="M810 588H900M810 585l22-20 15 20" stroke-width="2.500"/><rect x="866" y="595" width="30" height="105" stroke="#5c1a70" stroke-width="2.500"/><path d="M808 703H896V758H808ZM808 703l88 55M896 703l-88 55" stroke="#7f1c8a" stroke-width="2.500"/></g>
<path d="M798 600V690" stroke="#6a3a90" stroke-width="3"/>
<g fill="#f2f2f2" stroke="none"><rect x="400" y="606" width="14" height="6"/><rect x="428" y="648" width="12" height="12"/><rect x="612" y="555" width="24" height="5"/><rect x="760" y="555" width="24" height="5"/><rect x="678" y="668" width="38" height="8"/><rect x="688" y="663" width="18" height="5"/><rect x="822" y="645" width="38" height="8"/><rect x="830" y="640" width="22" height="5"/><rect x="950" y="645" width="54" height="6"/><rect x="960" y="651" width="34" height="6"/><rect x="636" y="829" width="57" height="7"/><rect x="645" y="847" width="55" height="4"/><rect x="948" y="847" width="55" height="4"/><rect x="675" y="895" width="50" height="6"/><rect x="645" y="923" width="52" height="4"/><rect x="1018" y="894" width="50" height="7"/><rect x="1040" y="923" width="28" height="4"/></g>
<g fill="#eee" stroke="none"><rect x="340" y="895" width="7" height="4"/><rect x="330" y="750" width="5" height="4"/></g>
</g>

<!-- crosshair -->
<path d="M340 258V412M327 336H417" stroke="#dcdcdc" stroke-width="1"/>
<rect x="336.500" y="332.500" width="7" height="7" fill="#000" stroke="#dcdcdc"/>
<!-- UCS -->
<path d="M345 696l5 6 5-6M350 702v6" fill="none" stroke="#bdbdbd" stroke-width="1.300"/>
<path d="M342.500 711V750" stroke="#888" stroke-width="1"/>
<path d="M395 749h2M400 749h2M405 749h2" stroke="#aaa"/>

<!-- nav bar -->
<rect x="1502" y="194" width="31" height="235" rx="3" fill="#454545" fill-opacity=".85"/>
<g fill="none" stroke="#666" stroke-width="1.200">
<path d="M1518 212l11 5v13l-11 6-11-6v-13zM1507 217l11 5 11-5M1518 222v14"/>
<circle cx="1518" cy="251" r="10"/><circle cx="1518" cy="251" r="5"/>
<path d="M1511 300l-4-10q3-4 4 1v-8q2-2 3 0l1 6v-8q2-2 3 0v8l1-6q3-1 2 3l-1 8q3-3 4-1-3 9-7 13h-5z"/>
<path d="M1512 316l-6 6 6 6M1522 314h-6"/><circle cx="1516" cy="324" r="5"/><path d="M1520 328l7 7"/>
<path d="M1508 360h16v10h-16zM1513 360v-10h6v10"/>
<rect x="1505" y="388" width="10" height="8"/><rect x="1517" y="388" width="10" height="8"/><rect x="1505" y="398" width="10" height="8"/><rect x="1517" y="398" width="10" height="8"/>
</g>

<!-- command line -->
<rect x="327" y="750" width="56" height="27" fill="#2b3441"/>
<rect x="383" y="750" width="553" height="26" fill="#fff"/>
<g fill="#dfe3e6"><rect x="331" y="756" width="2" height="2"/><rect x="335" y="756" width="2" height="2"/><rect x="331" y="760" width="2" height="2"/><rect x="335" y="760" width="2" height="2"/><rect x="331" y="764" width="2" height="2"/><rect x="335" y="764" width="2" height="2"/><rect x="331" y="768" width="2" height="2"/><rect x="335" y="768" width="2" height="2"/></g>
<path d="M343 758l8 8M351 758l-8 8" stroke="#e9ecee" stroke-width="2"/>
<path d="M364 769l8-8q-1-4 2-5l3-1-2 3 2 2 3-2q0 5-5 5l-8 8z" fill="#e9ecee"/>
<rect x="387.500" y="756.500" width="15" height="12" fill="#e4e5e5" stroke="#7a7a7a"/><rect x="388" y="757" width="14" height="3" fill="#9a9a9a"/>
<path d="M405 761h8l-4 3.500z" fill="#666"/>
<rect x="414" y="756" width="1.500" height="14" fill="#111"/>
<path d="M923 764h9l-4.500-3.500z" fill="#555"/>

<!-- layout tabs -->
<rect x="0" y="777" width="1536" height="47" fill="#222a35"/>
<path d="M12 778h58l-4 12q-1 5-6 5H22q-4 0-6-5z" fill="#3a4757"/>
<path d="M72 778h117l-5 12q-1 5-6 5H84q-4 0-6-5z" fill="#2f3946"/>
<path d="M192 778h132l-5 12q-1 5-6 5H204q-4 0-6-5z" fill="#2f3946"/>
<path d="M328 778h132l-3 12q-1 5-6 5H340q-4 0-6-5z" fill="#2f3946"/>
<path d="M465 778h22l-2 12q-1 5-6 5h-9q-4 0-4-5z" fill="#2f3946"/>
<text x="22" y="790" textLength="36" class="b">Model</text>
<text x="81" y="790" textLength="96" class="m c">MV7-FLOOR PLAN</text>
<text x="200" y="790" textLength="115" class="m c">MV10 - LOWER LEVEL</text>
<text x="338" y="790" textLength="111" class="m c">MV10 - UPPER LEVEL</text>
<path d="M476 783v7M472 786.500h8" stroke="#aab2bb" stroke-width="1.800"/>

<!-- status bar -->
<g fill="#323c4a">
<rect x="946" y="798" width="47" height="25"/><rect x="996" y="798" width="66" height="25"/><rect x="1063" y="798" width="105" height="25"/><rect x="1165" y="798" width="69" height="25"/><rect x="1231" y="798" width="104" height="25"/><rect x="1337" y="798" width="46" height="25"/><rect x="1404" y="798" width="28" height="25"/><rect x="1431" y="798" width="54" height="25"/><rect x="1488" y="798" width="48" height="25"/>
</g>
<rect x="1063" y="798" width="23" height="25" fill="#5b8fc4"/><rect x="1189" y="798" width="23" height="25" fill="#5b8fc4"/>
<text x="950" y="815" textLength="41" style="font-size:12px;fill:#e4e7ea">MODEL</text>
<path d="M1001 805h14M1001 810h14M1001 815h14M1004 802v16M1008 802v16M1012 802v16" stroke="#d5d9dd"/>
<path d="M1026 805h11M1026 809h11M1026 813h11M1026 817h11" stroke="#d5d9dd" stroke-width="1.500" stroke-dasharray="1.500 2.500"/>
<use href="#da" x="1048" y="809"/>
<path d="M1066 801v18h18M1067 815h6v4" fill="none" stroke="#c6e2f7" stroke-width="1.500"/>
<circle cx="1096" cy="811" r="6.500" fill="none" stroke="#8a939d"/><path d="M1096 811h12M1096 811l7-7" stroke="#8a939d"/>
<use href="#da" x="1114" y="809"/>
<path d="M1137 800v20M1131 804l12 12" stroke="#5a7e4a" stroke-width="1.400"/><path d="M1136 806l4 8" stroke="#a24a4a"/>
<use href="#da" x="1153" y="809"/>
<path d="M1169 817l15-12M1169 817h16" stroke="#a3abb4" fill="none"/>
<rect x="1194.500" y="803.500" width="14" height="14" fill="none" stroke="#d7e9f8" stroke-width="1.400"/><circle cx="1194" cy="803" r="1.500" fill="#eaf4fb"/><circle cx="1208" cy="817" r="1.500" fill="#eaf4fb"/>
<use href="#da" x="1217" y="809"/>
<g fill="#d5d9dd"><path d="M1235 818l4-9-3-6 5 3 2 0 3-3-2 6 4 9-5-5-3 0z"/><path d="M1259 818l4-9-3-6 5 3 2 0 3-3-2 6 4 9-5-5-3 0z"/><path d="M1283 819l4-10 2-7 2 7 4 10-6-5z"/></g>
<circle cx="1247" cy="805" r="2.200" fill="none" stroke="#d5d9dd"/><path d="M1272 802v5M1270 804.500h5" stroke="#d5d9dd"/>
<text x="1307" y="815" style="font-size:12px;fill:#dfe3e6">1:1</text>
<use href="#da" x="1325" y="808"/>
<circle cx="1350" cy="811" r="5.500" fill="none" stroke="#d5d9dd" stroke-width="3"/><path d="M1350 802v3M1350 817v3M1341 811h3M1356 811h3M1344 805l2 2M1354 815l2 2M1356 805l-2 2M1346 815l-2 2" stroke="#d5d9dd" stroke-width="2.200"/>
<use href="#da" x="1366" y="809"/>
<path d="M1389 803v16M1381 811h16" stroke="#e2e5e8" stroke-width="2"/>
<rect x="1409" y="802" width="6.500" height="6.500" fill="none" stroke="#a6adb5"/><circle cx="1420" cy="809" r="3.500" fill="none" stroke="#a6adb5"/><path d="M1413 814l-4 5h8z" fill="none" stroke="#a6adb5"/>
<path d="M1437 806q2-6 10-6t10 6l-2 6h-16z" fill="#4a88bf"/><rect x="1435" y="808" width="9" height="9" fill="#e5c24a"/><path d="M1444 813l4 5 8-8" fill="none" stroke="#43b74d" stroke-width="2.400"/>
<rect x="1462" y="804" width="12" height="12" fill="#e8e9ea"/><path d="M1466 815l6-8 4 5z" fill="#6a7783"/><path d="M1473 809l5 9h-10z" fill="#e67e30"/>
<rect x="1491.500" y="804.500" width="15" height="11" fill="none" stroke="#d5d9dd" stroke-width="1.200"/><path d="M1494 813l3-3M1504 807l-3 3" stroke="#d5d9dd"/>
<path d="M1516 804h16M1516 810h16M1516 817h16" stroke="#e2e5e8" stroke-width="2"/>

<!-- taskbar -->
<rect x="0" y="824" width="1536" height="40" fill="url(#sb)"/>
<g fill="#111"><path d="M16 838l7-1v7h-7zM24 837l8-1v8h-8zM16 845h7v7l-7-1zM24 845h8v8l-8-1z"/></g>
<rect x="49" y="824" width="342" height="40" fill="#fff"/>
<circle cx="71" cy="842" r="5.500" fill="none" stroke="#222" stroke-width="1.400"/><path d="M67 846l-6 6" stroke="#222" stroke-width="1.400"/>
<text x="88" y="850" textLength="131" style="font-size:15px;fill:#333">Type here to search</text>
<circle cx="416" cy="844" r="6.500" fill="none" stroke="#111" stroke-width="2.400"/>
<path d="M457 838h11v13h-11zM457 835h11M457 854h11M471 837v3M471 842v8M471 852v1" fill="none" stroke="#222" stroke-width="1.300"/>
<path d="M504 838l12-8 12 8v14h-24z" fill="#1f8ad2"/><path d="M504 838l12 8 12-8v-1l-12-7-12 7z" fill="#fff"/><path d="M504 839l12 8 12-8v5l-12 6-12-6z" fill="#50b0ea"/>
<path d="M556 835l9-4 7 1v25l-7 1-9-3z" fill="#d83b2a"/><path d="M561 838l4-1v14l-4-1z" fill="#fff"/><path d="M565 831l7 1v25l-7 1z" fill="#ea5c24"/>
<rect x="605" y="832" width="18" height="24" fill="#6a7783"/><rect x="607" y="834" width="14" height="5" fill="#4fc3e8"/><g fill="#dfe3e6"><rect x="607" y="841" width="4" height="4"/><rect x="612" y="841" width="4" height="4"/><rect x="607" y="846" width="4" height="4"/><rect x="612" y="846" width="4" height="4"/><rect x="607" y="851" width="4" height="4"/><rect x="612" y="851" width="4" height="4"/></g><rect x="617" y="841" width="4" height="14" fill="#1d5f9a"/>
<path d="M653 835h10l3 3h11v15h-24z" fill="#e7b83c"/><path d="M653 840h24v13h-24z" fill="#f8d568"/><path d="M659 846h12v7h-3v-4h-6v4h-3z" fill="#2f88c9"/>
<circle cx="714" cy="844" r="12" fill="#dc4437"/><path d="M714 844l-10.500-6A12 12 0 0 0 709 855z" fill="#28a745"/><path d="M714 844h12a12 12 0 0 1-16 11z" fill="#f3bd28"/><circle cx="714" cy="844" r="5" fill="#4a86e8" stroke="#eee" stroke-width="2"/>
<circle cx="719" cy="850" r="7" fill="#5a4435"/><ellipse cx="719" cy="848" rx="3" ry="4" fill="#d6a98a"/>
<rect x="739" y="824" width="49" height="40" fill="#e5eaee"/>
<path d="M752 852l8-19h7l5 19h-5l-1-5h-6l-3 5zM761 843h4l-1-6z" fill="#b5232e"/>
<g fill="#0b6cc0"><rect x="594" y="862" width="41" height="2"/><rect x="644" y="862" width="41" height="2"/><rect x="693" y="862" width="41" height="2"/><rect x="739" y="862" width="49" height="2"/></g>
<rect x="49" y="863" width="342" height="1" fill="#d0d4d8"/>

<path d="M1081 852q8-1 15-11l6-7q5 3 7 8l-6 9q-6 6-14 5-6 0-8-4z" fill="#f2a72e"/><circle cx="1100" cy="834" r="3" fill="#d13a2b"/>
<text x="1111" y="850" textLength="30" style="font-size:15px;fill:#222">21°C</text>
<text x="1150" y="850" textLength="67" style="font-size:15px;fill:#222">Despejado</text>
<path d="M1234 848l6-6 6 6" fill="none" stroke="#222" stroke-width="1.400"/>
<path d="M1257 848q-1-4 3-5 2-4 6-2 5 0 5 4 2 3-1 4h-12z" fill="#eceff1" stroke="#333" stroke-width="1.200"/>
<rect x="1283" y="841" width="15" height="9" fill="#eee" stroke="#222"/><rect x="1284" y="842" width="10" height="7" fill="#222"/><path d="M1281 838h4v3" stroke="#222" fill="none"/>
<path d="M1305 842h3l4-3v11l-4-3h-3zM1315 841q3 4 0 8M1318 839q4 6 0 11" fill="none" stroke="#222" stroke-width="1.200"/>
<rect x="1329" y="837" width="14" height="13" fill="#dfe4e8" stroke="#222"/><path d="M1332 845q4-6 8-3" stroke="#222" fill="none"/><circle cx="1341" cy="848" r="3" fill="#1b6fc2"/>
<rect x="1353.500" y="838.500" width="23" height="13" fill="none" stroke="#333"/><path d="M1356 842h19M1356 845h19M1359 848h13" stroke="#444" stroke-dasharray="1.500 1"/>
<text x="1387" y="840" textLength="23" style="font-size:12px;fill:#222">ENG</text>
<text x="1392" y="858" style="font-size:12px;fill:#222">ES</text>
<text x="1429" y="840" textLength="41" style="font-size:12px;fill:#222">8:12 PM</text>
<text x="1420" y="858" textLength="60" style="font-size:12px;fill:#222">10/10/2022</text>
<path d="M1496 837h16v12h-8l-4 4v-4h-4z" fill="#111"/><path d="M1499 841h10M1499 844h10" stroke="#ddd"/>
<circle cx="1510" cy="852" r="7" fill="#d5dce2" stroke="#777"/><text x="1507" y="857" style="font-size:12px;fill:#222">1</text>
</svg>
</body></html>
